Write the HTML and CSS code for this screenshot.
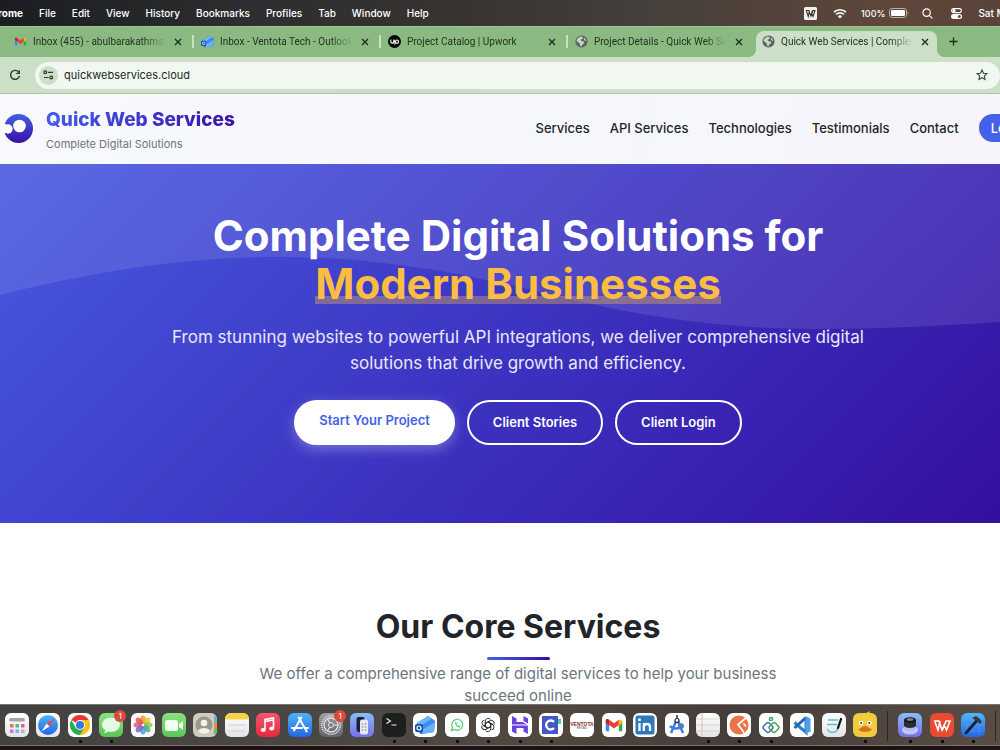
FILE: index.html
```html
<!DOCTYPE html>
<html lang="en">
<head>
<meta charset="utf-8">
<meta name="viewport" content="width=device-width, initial-scale=1">
<title>Quick Web Services | Complete Digital Solutions</title>
<link rel="stylesheet" href="styles.css">
</head>
<body>
<svg class="defs" aria-hidden="true">
  <defs>
    <linearGradient id="brand" x1="0" y1="0" x2="0" y2="1"><stop offset="0" stop-color="#4560e6"/><stop offset="1" stop-color="#380fa4"/></linearGradient>
    <linearGradient id="blue" x1="0" y1="0" x2="0" y2="1"><stop offset="0" stop-color="#4db7f8"/><stop offset="1" stop-color="#2464e4"/></linearGradient>
    <linearGradient id="green" x1="0" y1="0" x2="0" y2="1"><stop offset="0" stop-color="#8be282"/><stop offset="1" stop-color="#5ac552"/></linearGradient>
    <linearGradient id="red" x1="0" y1="0" x2="0" y2="1"><stop offset="0" stop-color="#f2566e"/><stop offset="1" stop-color="#e8293c"/></linearGradient>
    <linearGradient id="silver" x1="0" y1="0" x2="0" y2="1"><stop offset="0" stop-color="#ffffff"/><stop offset="1" stop-color="#e4e4e6"/></linearGradient>
    <linearGradient id="grey" x1="0" y1="0" x2="0" y2="1"><stop offset="0" stop-color="#a0a0a5"/><stop offset="1" stop-color="#636368"/></linearGradient>
    <linearGradient id="violet" x1="0" y1="0" x2="0" y2="1"><stop offset="0" stop-color="#86bdf8"/><stop offset="1" stop-color="#7a6ee6"/></linearGradient>
    <symbol id="globe" viewBox="0 0 12 12"><circle cx="6" cy="6" r="5.6" fill="#5f6368"/><path d="M2 3.5 5 1.4 7.5 2 6.8 3.8 5.3 4.2 5.6 5.6 8 6 8.4 7.6 6.5 9 6 10.6 4.6 9.7 4.5 7.8 1.5 5.6Z" fill="#c2dabd"/><path d="M8.6 2.4 10.3 5 9.5 5.6 8.2 4.4Z" fill="#c2dabd"/></symbol>
    <symbol id="gmail" viewBox="0 0 16 12"><path d="M0 2v9a1 1 0 0 0 1 1h2.5V4Z" fill="#4285f4"/><path d="M12.5 4v8H15a1 1 0 0 0 1-1V2Z" fill="#34a853"/><path d="M12.5 0.8 16 2v2.2l-3.5 2.6Z" fill="#fbbc04"/><path d="M3.500 1 8 4.400 12.500 1v5L8 9.400 3.500 6Z" fill="#ea4335"/><path d="M0 2C0 .2 2 0 3.500 1v5.500L0 3.800Z" fill="#c5221f"/></symbol>
    <symbol id="outlook" viewBox="0 0 20 18"><path d="M2 7 13 0 20 5 19 16 6 18 2 15Z" fill="#2763c7"/><path d="M2 7 13 0 17 3 6 10Z" fill="#6fb8f6"/><path d="m5 10 12-7 3 3-12 7Z" fill="#3b8def"/><path d="m8 13 12-7-1 10-12 2Z" fill="#67b3f5"/><rect y="8" width="8" height="8" rx="2" fill="#1550ad"/><circle cx="4" cy="12" r="2" fill="none" stroke="#fff" stroke-width="1.2"/></symbol>
    <symbol id="close" viewBox="0 0 8 8"><path d="m1 1 6 6M7 1 1 7" stroke="#1f2b1e" stroke-width="1.3"/></symbol>
  </defs>
</svg>

<header class="menubar">
  <nav class="menus" aria-label="Application menu">
    <button class="menu app-menu">rome</button><button class="menu">File</button><button class="menu">Edit</button><button class="menu">View</button><button class="menu">History</button><button class="menu">Bookmarks</button><button class="menu">Profiles</button><button class="menu">Tab</button><button class="menu">Window</button><button class="menu">Help</button>
  </nav>
  <div class="status">
    <svg width="13" height="13" viewBox="0 0 13 13"><rect width="13" height="13" rx="1.5" fill="#f2efed"/><path d="M1.800 3.500h3l2 5.500 1.700-5.500M5.500 3.500 4.300 9.500 2.400 4M6.800 9.500 9 3.500h2L9 9.500 7.500 6" fill="none" stroke="#3b3532" stroke-width="1.1"/></svg>
    <svg class="wifi" width="14" height="11" viewBox="0 0 14 11"><g fill="none" stroke="#fff" stroke-width="1.7"><path d="M1 4.2a8.6 8.6 0 0 1 12 0M3.1 6.4a5.6 5.6 0 0 1 7.8 0"/></g><path d="M7 10.6 4.8 8.3a3.2 3.2 0 0 1 4.4 0Z" fill="#fff"/></svg>
    <span class="battery">100%<svg width="20" height="10" viewBox="0 0 20 10"><rect x=".5" y=".5" width="17" height="9" rx="2.6" fill="none" stroke="#b9b0aa"/><rect x="2" y="2" width="14" height="6" rx="1.2" fill="#fff"/><path d="M18.6 3.5c1 .5 1 2.500 0 3Z" fill="#b9b0aa"/></svg></span>
    <svg class="search" width="11" height="11" viewBox="0 0 11 11"><g fill="none" stroke="#fff" stroke-width="1.2"><circle cx="4.600" cy="4.600" r="3.700"/><path d="m7.300 7.300 3 3"/></g></svg>
    <svg width="11" height="11" viewBox="0 0 11 11"><rect x=".6" y=".6" width="9.800" height="4" rx="2" fill="none" stroke="#fff" stroke-width="1.100"/><circle cx="3" cy="2.600" r="1.600" fill="#fff"/><rect y="6" width="11" height="5" rx="2.500" fill="#fff"/><circle cx="8.300" cy="8.500" r="1.500" fill="#5a4b44"/></svg>
    <span class="clock">Sat May</span>
  </div>
</header>

<div class="tabs" role="tablist">
  <div class="tab" role="tab"><svg class="favicon" viewBox="-1 -2 18 16"><use href="#gmail" width="16" height="12"/></svg><span class="tab-title">Inbox (455) - abulbarakathms@gmail</span><button class="close" aria-label="Close tab"><svg width="8" height="8"><use href="#close"/></svg></button></div>
  <div class="tab" role="tab"><svg class="favicon"><use href="#outlook"/></svg><span class="tab-title">Inbox - Ventota Tech - Outlook</span><button class="close" aria-label="Close tab"><svg width="8" height="8"><use href="#close"/></svg></button></div>
  <div class="tab" role="tab"><svg class="favicon" viewBox="0 0 13 13"><circle cx="6.500" cy="6.500" r="6.500" fill="#070707"/><path d="M2.800 4.600v1.900c0 2.200 3 2.200 3 0V4.600c.8 2.400 1.800 3.700 3 3.700 2.300 0 2.300-3.300 0-3.300C7.500 5 7.100 6.600 6.800 9.500" fill="none" stroke="#fff" stroke-width="1.100"/></svg><span class="tab-title">Project Catalog | Upwork</span><button class="close" aria-label="Close tab"><svg width="8" height="8"><use href="#close"/></svg></button></div>
  <div class="tab no-rule" role="tab"><svg class="favicon"><use href="#globe"/></svg><span class="tab-title">Project Details - Quick Web Services</span><button class="close" aria-label="Close tab"><svg width="8" height="8"><use href="#close"/></svg></button></div>
  <div class="tab active" role="tab" aria-selected="true"><svg class="favicon"><use href="#globe"/></svg><span class="tab-title">Quick Web Services | Complete Digital</span><button class="close" aria-label="Close tab"><svg width="8" height="8"><use href="#close"/></svg></button></div>
  <button class="new-tab" aria-label="New tab"><svg width="9" height="9" viewBox="0 0 9 9"><path d="M4.500.5v8M.5 4.500h8" stroke="#1f2b1e" stroke-width="1.300"/></svg></button>
</div>

<div class="toolbar">
  <button class="reload" aria-label="Reload"><svg width="12" height="12" viewBox="0 0 12 12"><path d="M10 3.600A4.500 4.500 0 1 0 10.500 6.800" fill="none" stroke="#2b382a" stroke-width="1.400"/><path d="M10.900.8v4.300H6.600l1.400-1.400h1.500V2.200Z" fill="#2b382a"/></svg></button>
  <div class="omnibox">
    <button class="site-info" aria-label="Site information"><svg width="11" height="10" viewBox="0 0 11 10"><g fill="none" stroke="#2b382a" stroke-width="1.200"><circle cx="2.300" cy="2.300" r="1.400"/><path d="M5 2.300h5M1 7.500h4.500"/><circle cx="8.200" cy="7.500" r="1.400"/></g></svg></button>
    <input class="url" type="text" aria-label="Address" value="quickwebservices.cloud">
    <button class="star" aria-label="Bookmark this page"><svg width="12" height="12" viewBox="0 0 12 12"><path d="m6 1 1.450 3.200 3.500.4-2.600 2.350.7 3.450L6 8.700 2.950 10.400l.7-3.450L1.050 4.600l3.500-.4Z" fill="none" stroke="#3a4639" stroke-width="1.100"/></svg></button>
  </div>
</div>

<div class="page">
  <header class="site-header">
    <a class="brand" href="#">
      <svg width="29" height="29" viewBox="0 0 29 29"><circle cx="14.500" cy="14.500" r="14.500" fill="url(#brand)"/><circle cx="15.500" cy="12" r="6.300" fill="#fff"/><circle cx="4" cy="15" r="4.700" fill="#fff"/><path d="M0 10h2v9H0Z" fill="#fff"/></svg>
      <span class="brand-text"><span class="brand-name">Quick Web Services</span><span class="brand-tag">Complete Digital Solutions</span></span>
    </a>
    <nav class="site-nav">
      <a href="#">Services</a><a href="#">API Services</a><a href="#">Technologies</a><a href="#">Testimonials</a><a href="#">Contact</a><a class="login" href="#">Login</a>
    </nav>
  </header>
  <main>
    <section class="hero">
      <svg class="wave" viewBox="0 0 1000 359" preserveAspectRatio="none" aria-hidden="true"><path d="M0 131C100 106 190 93 280 93 390 93 480 113 574 136 650 154 730 165 815 165 880 165 940 162 1000 158V0H0Z" fill="#fff" fill-opacity=".1"/></svg>
      <div class="hero-content">
        <h1>Complete Digital Solutions for<br><span class="accent">Modern Businesses</span></h1>
        <p>From stunning websites to powerful API integrations, we deliver comprehensive digital<br>solutions that drive growth and efficiency.</p>
        <div class="actions"><a class="btn primary" href="#">Start Your Project</a><a class="btn" href="#">Client Stories</a><a class="btn" href="#">Client Login</a></div>
      </div>
    </section>
    <section class="services">
      <h2>Our Core Services</h2>
      <p>We offer a comprehensive range of digital services to help your business<br>succeed online</p>
    </section>
  </main>
</div>

<footer class="dock">
  <div class="dock-group apps">
    <button class="icon" aria-label="Launchpad"><svg viewBox="0 0 24 24"><rect width="24" height="24" rx="6" fill="url(#silver)"/><rect x="4" y="5" width="16" height="3.500" rx="1.700" fill="#a5a5a7"/><path d="M5 11h3.500v3.500H5Z" fill="#ef6a54"/><path d="M10.500 11H14v3.500h-3.500Z" fill="#4dc27e"/><path d="M16 11h3.500v3.500H16Z" fill="#e45aa8"/><path d="M5 16.500h3.500V20H5Z" fill="#bc79eb"/><path d="M10.500 16.500H14V20h-3.500Z" fill="#6fb5f3"/><path d="M16 16.500h3.500V20H16Z" fill="#b4b4b8"/></svg></button>
    <button class="icon" aria-label="Safari"><svg viewBox="0 0 24 24"><rect width="24" height="24" rx="6" fill="url(#silver)"/><circle cx="12" cy="12" r="10" fill="url(#blue)"/><path d="M18.500 5.500 10.600 10.600 13.400 13.400Z" fill="#ee4b3e"/><path d="M5.500 18.500 10.600 10.600 13.400 13.400Z" fill="#fff"/></svg></button>
    <button class="icon running" aria-label="Chrome"><svg viewBox="0 0 24 24"><rect width="24" height="24" rx="6" fill="#fff"/><path d="M12 12 3.300 7A10 10 0 0 1 20.700 7Z" fill="#e33b2e"/><path d="M12 12V7h8.700A10 10 0 0 1 12 22Z" fill="#fbc116"/><path d="m12 12 4.300 2.500L12 22A10 10 0 0 1 3.300 7l4.400 7.500Z" fill="#2da94f"/><circle cx="12" cy="12" r="5" fill="#fff"/><circle cx="12" cy="12" r="4" fill="#3478e5"/></svg></button>
    <button class="icon running" aria-label="Messages"><svg viewBox="0 0 24 24"><rect width="24" height="24" rx="6" fill="url(#green)"/><path d="M12 4.500c5 0 9 3.200 9 7.200s-4 7.200-9 7.200c-1 0-2-.1-3-.4-1 .9-2.500 1.500-4 1.500 1-1 1.300-2 1.200-3C4.200 15.700 3 13.800 3 11.700c0-4 4-7.200 9-7.200Z" fill="#f0fff0" fill-opacity=".9"/></svg><span class="badge">1</span></button>
    <button class="icon" aria-label="Photos"><svg viewBox="0 0 24 24"><rect width="24" height="24" rx="6" fill="#fafafa"/><g fill-opacity=".85"><ellipse cx="12" cy="7" rx="2.800" ry="4.500" fill="#f29a27"/><ellipse cx="12" cy="7" rx="2.800" ry="4.500" fill="#e4c52b" transform="rotate(45 12 12)"/><ellipse cx="12" cy="7" rx="2.800" ry="4.500" fill="#9bc53c" transform="rotate(90 12 12)"/><ellipse cx="12" cy="7" rx="2.800" ry="4.500" fill="#4ab38a" transform="rotate(135 12 12)"/><ellipse cx="12" cy="7" rx="2.800" ry="4.500" fill="#5598df" transform="rotate(180 12 12)"/><ellipse cx="12" cy="7" rx="2.800" ry="4.500" fill="#7b64c4" transform="rotate(225 12 12)"/><ellipse cx="12" cy="7" rx="2.800" ry="4.500" fill="#c460a4" transform="rotate(270 12 12)"/><ellipse cx="12" cy="7" rx="2.800" ry="4.500" fill="#e8534b" transform="rotate(315 12 12)"/></g><circle cx="12" cy="12" r="1.300" fill="#fff"/></svg></button>
    <button class="icon" aria-label="FaceTime"><svg viewBox="0 0 24 24"><rect width="24" height="24" rx="6" fill="url(#green)"/><rect x="3" y="7" width="13" height="11" rx="2.500" fill="#f1fff0"/><path d="m17 11 4-3v9l-4-3Z" fill="#f1fff0"/></svg></button>
    <button class="icon" aria-label="Contacts"><svg viewBox="0 0 24 24"><rect width="24" height="24" rx="6" fill="#cfccbd"/><path d="M21 2a6 6 0 0 1 3 4v3h-3Z" fill="#55b6ee"/><path d="M21 9h3v7h-3Z" fill="#f28d35"/><path d="M21 16h3v2a6 6 0 0 1-3 4Z" fill="#5dc466"/><circle cx="11" cy="12" r="8.500" fill="#9a978c"/><circle cx="11" cy="10" r="3.300" fill="#f3f1e8"/><path d="M5 18c1-4 11-4 12 0-3 3.500-9 3.500-12 0Z" fill="#f3f1e8"/></svg></button>
    <button class="icon" aria-label="Notes"><svg viewBox="0 0 24 24"><rect width="24" height="24" rx="6" fill="url(#silver)"/><path d="M0 6.500V6a6 6 0 0 1 6-6h12a6 6 0 0 1 6 6v.5Z" fill="#f8d14b"/><path d="M3 12h18M3 18h18" stroke="#c9c9cb" stroke-width=".8"/></svg></button>
    <button class="icon" aria-label="Music"><svg viewBox="0 0 24 24"><rect width="24" height="24" rx="6" fill="url(#red)"/><path d="M9 16.500V6.500L17.500 5v10M9 8.500 17.500 7" fill="none" stroke="#fff" stroke-width="1.600"/><ellipse cx="7.200" cy="17" rx="2.500" ry="2" fill="#fff"/><ellipse cx="15.700" cy="15.500" rx="2.500" ry="2" fill="#fff"/></svg></button>
    <button class="icon" aria-label="App Store"><svg viewBox="0 0 24 24"><rect width="24" height="24" rx="6" fill="url(#blue)"/><path d="M13.300 4.500 6 17.500M10.700 4.500l8 14M4 15h10M17 15h3" fill="none" stroke="#fff" stroke-width="2" stroke-linecap="round"/></svg></button>
    <button class="icon" aria-label="System Settings"><svg viewBox="0 0 24 24"><rect width="24" height="24" rx="6" fill="url(#grey)"/><circle cx="12" cy="12" r="9.300" fill="none" stroke="#e2e2e4" stroke-width="1.500" stroke-dasharray="1.200 .8"/><circle cx="12" cy="12" r="7" fill="none" stroke="#e2e2e4" stroke-width="1.300"/><circle cx="12" cy="12" r="2.500" fill="none" stroke="#e2e2e4"/><path d="M14.500 12H19M10.700 9.800 8.500 6M10.700 14.200 8.500 18" stroke="#e2e2e4" stroke-width="1.200"/></svg><span class="badge">1</span></button>
    <button class="icon" aria-label="iPhone Mirroring"><svg viewBox="0 0 24 24"><rect width="24" height="24" rx="6" fill="url(#violet)"/><rect x="6.500" y="4" width="8" height="15" rx="2" fill="#1b2238"/><rect x="10" y="6.500" width="8" height="15" rx="2" fill="#e7e9f5"/><g fill="#8e8ea4"><circle cx="12.500" cy="11" r=".8"/><circle cx="15.500" cy="11" r=".8"/><circle cx="12.500" cy="14" r=".8"/><circle cx="15.500" cy="14" r=".8"/><circle cx="12.500" cy="17" r=".8"/><circle cx="15.500" cy="17" r=".8"/></g></svg></button>
    <button class="icon running" aria-label="Terminal"><svg viewBox="0 0 24 24"><rect width="24" height="24" rx="6" fill="#1d1e1e"/><path d="m4.500 5.500 4 2.500-4 2.500M9.500 12h5" fill="none" stroke="#f2f2f2" stroke-width="1.100"/></svg></button>
    <button class="icon running" aria-label="Outlook"><svg viewBox="0 0 24 24"><rect width="24" height="24" rx="6" fill="#fff"/><use href="#outlook" x="2" y="3" width="20" height="18"/></svg></button>
    <button class="icon running" aria-label="WhatsApp"><svg viewBox="0 0 24 24"><rect width="24" height="24" rx="6" fill="#fff"/><path d="m6.500 17.500 1-3a5.500 5.500 0 1 1 2 2Z" fill="none" stroke="#4fce6d" stroke-width="1.200"/><path d="M10 9.500c0 2.500 2 4.800 4.600 5.200l.9-1.400-1.700-1-.8.700c-.8-.4-1.300-.9-1.600-1.700l.5-.7-.7-1.500Z" fill="#4fce6d"/></svg></button>
    <button class="icon running" aria-label="ChatGPT"><svg viewBox="0 0 24 24"><rect width="24" height="24" rx="6" fill="#fff"/><g fill="none" stroke="#252525" stroke-width=".9"><path id="knot" d="M9.300 13.500V8.300a2.900 2.900 0 0 1 5.200-1.800M9.300 10.400 13.500 8"/><use href="#knot" transform="rotate(60 12 12)"/><use href="#knot" transform="rotate(120 12 12)"/><use href="#knot" transform="rotate(180 12 12)"/><use href="#knot" transform="rotate(240 12 12)"/><use href="#knot" transform="rotate(300 12 12)"/></g></svg></button>
    <button class="icon running" aria-label="Hostinger"><svg viewBox="0 0 24 24"><rect width="24" height="24" rx="6" fill="#fff"/><path d="M4 3 8.500 5.500V9h6L19 11.500H4ZM20 10.500 15.500 8V3L20 5.500ZM4 12.500h15.900V21L15.500 18.500V15h-7v6L4 18.500Z" fill="#6a42e0"/></svg></button>
    <button class="icon running" aria-label="Clockify"><svg viewBox="0 0 24 24"><rect width="24" height="24" rx="6" fill="#fff"/><path d="M3 3h16v18H3Z" fill="#4557c6"/><path d="M19 6h3v5h-3Z" fill="#4bd28d"/><path d="M15 9a4.500 4.500 0 1 0 0 6" fill="none" stroke="#fff" stroke-width="2.300"/></svg></button>
    <button class="icon" aria-label="Ventota"><svg viewBox="0 0 24 24"><rect width="24" height="24" rx="6" fill="#fff"/><text class="logo-word" x="12" y="12.500">VENTOTA</text><text class="logo-sub" x="12" y="16">RETAIL</text></svg></button>
    <button class="icon" aria-label="Gmail"><svg viewBox="0 0 24 24"><rect width="24" height="24" rx="6" fill="#fff"/><use href="#gmail" x="3.500" y="5.500" width="17" height="13"/></svg></button>
    <button class="icon" aria-label="LinkedIn"><svg viewBox="0 0 24 24"><rect width="24" height="24" rx="6" fill="#fff"/><rect x="2.500" y="2.500" width="19" height="19" rx="2.500" fill="#2e78b7"/><path d="M6.500 10v8M10.800 18v-8M10.800 14c0-4 6.200-4 6.200 0v4" fill="none" stroke="#fff" stroke-width="2.300"/><circle cx="6.500" cy="6.700" r="1.500" fill="#fff"/></svg></button>
    <button class="icon" aria-label="Android Studio"><svg viewBox="0 0 24 24"><rect width="24" height="24" rx="6" fill="#fff"/><circle cx="16" cy="13" r="3" fill="#56a95f"/><path d="M12 6 6 20M12 6l6 14M5 13c3 4 11 3 13-1" fill="none" stroke="#4079ed" stroke-width="2.500"/><path d="M12 2v3" stroke="#232b35" stroke-width="1.500"/><circle cx="12" cy="7.500" r="2" fill="#fff" stroke="#232b35" stroke-width="1.200"/></svg></button>
    <button class="icon running" aria-label="TextEdit"><svg viewBox="0 0 24 24"><rect width="24" height="24" rx="6" fill="url(#silver)"/><path d="M0 6h24M0 12h24M0 18h24" stroke="#cccdd0" stroke-width=".8"/><path d="M6 0v24" stroke="#efb6ae"/></svg></button>
    <button class="icon running" aria-label="API client"><svg viewBox="0 0 24 24"><rect width="24" height="24" rx="6" fill="#fff"/><circle cx="12" cy="12" r="9.500" fill="#ec7347"/><path d="m19 5-8 6.500 6 8M16.500 10.500l2.500 3" fill="none" stroke="#fff" stroke-width="1.700"/></svg></button>
    <button class="icon running" aria-label="Sequence"><svg viewBox="0 0 24 24"><rect width="24" height="24" rx="6" fill="#fff"/><g fill="none" stroke-width="1.500"><circle cx="12" cy="6" r="1.600" stroke="#45a25b"/><rect x="-4" y="-4" width="8" height="8" rx="2" stroke="#3c70b7" transform="translate(9 14.500) rotate(45)"/><rect x="-4" y="-4" width="8" height="8" rx="2" stroke="#45a25b" transform="translate(15 14.500) rotate(45)"/></g></svg></button>
    <button class="icon" aria-label="VS Code"><svg viewBox="0 0 24 24"><rect width="24" height="24" rx="6" fill="#fff"/><path d="M16 4.500v15L4.500 9.500" fill="none" stroke="#2f7fc6" stroke-width="3"/><path d="M4.500 15 16 4.500" stroke="#2467ae" stroke-width="3"/><path d="m15.500 3 5 2.500v13l-5 2.500Z" fill="#4aa3e6"/></svg></button>
    <button class="icon" aria-label="Freeform"><svg viewBox="0 0 24 24"><rect width="24" height="24" rx="6" fill="url(#silver)"/><path d="M6 7h10M5 11.500h10M5.500 16c2 5 10 4 10-1" fill="none" stroke="#54bfd0" stroke-width="1.300"/><path d="m19 6-3 9" stroke="#161616" stroke-width="2.300" stroke-linecap="round"/></svg></button>
    <button class="icon running" aria-label="Cyberduck"><svg viewBox="0 0 24 24"><rect width="24" height="24" rx="6" fill="#f1cc3d"/><path d="M7 1c3 1 6-1 10-3-1 2-.5 3 1 4Z" fill="#f1cc3d"/><circle cx="8" cy="10" r="2.300" fill="#fff"/><circle cx="16.500" cy="10" r="2.300" fill="#fff"/><circle cx="8.200" cy="10" r=".9" fill="#222"/><circle cx="16.300" cy="10" r=".9" fill="#222"/><path d="M5 16c3 0 4-3 7-3s4 3 7 3c-2 4-12 4-14 0Z" fill="#dd6f29"/></svg></button>
  </div>
  <span class="rule"></span>
  <div class="dock-group recent">
    <button class="icon running" aria-label="Disk utility"><svg viewBox="0 0 24 24"><rect width="24" height="24" rx="6" fill="url(#violet)"/><ellipse cx="12" cy="17" rx="8" ry="4.500" fill="#dbe5ff" fill-opacity=".7"/><path d="M6 7v7c1 3 11 3 12 0V7Z" fill="#2b2d32"/><path d="M6 13c2 2.500 10 2.500 12 0v3c-2 2.500-10 2.500-12 0Z" fill="#a9bdf2"/><ellipse cx="12" cy="7" rx="6" ry="2.800" fill="#17181b"/><ellipse cx="12" cy="6.500" rx="3.500" ry="1.300" fill="#85888f"/></svg></button>
    <button class="icon running" aria-label="WPS Office"><svg viewBox="0 0 24 24"><rect width="24" height="24" rx="6" fill="#e94a30"/><path d="M4 8h5l3 9 4-9M10 8 8 17 5 9M12.500 17 16 8h4l-3.500 9L14 11" fill="none" stroke="#fff" stroke-width="1.600"/></svg></button>
    <button class="icon running" aria-label="Xcode"><svg viewBox="0 0 24 24"><rect width="24" height="24" rx="6" fill="url(#blue)"/><path d="M6 2v20M12 2v20M18 2v20M2 6h20M2 12h20M2 18h20" stroke="#7ab7f7" stroke-opacity=".5" stroke-width=".5"/><path d="M5 20 15.500 8" stroke="#18212c" stroke-width="2.800" stroke-linecap="round"/><path d="m11 5 4-2 4 3 2 3-2.500 2-2-2.500-3-2Z" fill="#353a42"/></svg></button>
  </div>
  <span class="rule"></span>
</footer>
</body>
</html>
```
FILE: styles.css
```css
* { box-sizing: border-box; }

body {
  margin: 0;
  height: 100vh;
  display: flex;
  flex-direction: column;
  overflow: hidden;
  background: #fff;
  color: #212529;
  font-family: Inter, "Liberation Sans", sans-serif;
}

button, input {
  margin: 0;
  padding: 0;
  border: 0;
  background: none;
  color: inherit;
  font: inherit;
}

a { color: inherit; text-decoration: none; }
svg { display: block; flex: none; }
.defs { position: absolute; width: 0; height: 0; }

/* System menu bar */
.menubar {
  flex: none;
  height: 26px;
  display: flex;
  justify-content: space-between;
  align-items: center;
  overflow: hidden;
  background: linear-gradient(90deg, #1c1d21, #2e2e30 25%, #373330 45%, #46403c 65%, #60463a 90%, #594339);
  color: #fff;
  font-size: 10px;
  font-weight: 500;
  white-space: nowrap;
}
.menus { display: flex; gap: 16px; }
.app-menu { font-weight: 700; margin-left: -2px; }
.status { display: flex; align-items: center; gap: 16px; margin-right: -23px; }
.status { margin-right: -17px; }
.battery { display: flex; align-items: center; gap: 4px; font-size: 9px; }
.wifi { margin-right: -2px; }
.search { margin: 0 2px 0 -3px; }

/* Tab strip */
.tabs {
  flex: none;
  height: 31px;
  display: flex;
  align-items: flex-end;
  padding-left: 6px;
  background: #8ab981;
  border-top: 1px solid #9bc694;
  color: #24331f;
  font-family: Roboto, "Liberation Sans", sans-serif;
  font-size: 10px;
}
.tab {
  position: relative;
  flex: 0 1 187px;
  min-width: 0;
  height: 26px;
  display: flex;
  align-items: center;
  gap: 6px;
  padding: 0 11px 5px 8px;
}
.tab:not(.active):not(.no-rule)::after {
  content: "";
  position: absolute;
  right: -1px;
  top: 4px;
  width: 2px;
  height: 13px;
  background: #c8e0c3;
}
.tab.active {
  flex-basis: 181px;
  margin-left: 2px;
  padding: 0 8px 5px 6px;
  background: #cbe0c6;
  border-radius: 8px 8px 0 0;
}
.tab.active::before, .tab.active::after {
  content: "";
  position: absolute;
  bottom: 0;
  width: 8px;
  height: 8px;
}
.tab.active::before { left: -8px; background: radial-gradient(circle at 0 0, transparent 8px, #cbe0c6 8px); }
.tab.active::after { right: -8px; background: radial-gradient(circle at 100% 0, transparent 8px, #cbe0c6 8px); }
.favicon { width: 13px; height: 13px; }
.tab-title {
  flex: 1;
  min-width: 0;
  overflow: hidden;
  white-space: nowrap;
  mask-image: linear-gradient(90deg, #000 84%, transparent);
}
.close { width: 8px; height: 8px; margin-left: 3px; }
.new-tab { margin: 0 0 11px 12px; }

/* Address bar */
.toolbar {
  flex: none;
  height: 37px;
  display: flex;
  align-items: center;
  gap: 14px;
  padding-left: 9px;
  background: #cbe0c6;
  border-bottom: 1px solid #acc5a8;
}
.omnibox {
  flex: 1;
  height: 27px;
  display: flex;
  align-items: center;
  gap: 6px;
  padding: 0 12px 0 4px;
  border-radius: 14px;
  background: #f1f8f1;
}
.site-info {
  width: 19px;
  height: 19px;
  display: grid;
  place-items: center;
  border-radius: 50%;
  background: #cbe0c6;
}
.url { flex: 1; min-width: 0; outline: 0; color: #22291f; font-size: 11px; }

/* Web page */
.page { flex: 1; min-height: 0; overflow: hidden; }
.site-header {
  height: 70px;
  display: flex;
  align-items: center;
  justify-content: space-between;
  padding: 0 0 2px 4px;
  overflow: hidden;
  background: linear-gradient(100deg, #f8f8fd, #f5f7fd 55%, #f7f4fb);
}
.brand { display: flex; align-items: center; gap: 13px; }
.brand-text { display: flex; flex-direction: column; gap: 4px; padding-top: 4px; }
.brand-name {
  background: linear-gradient(135deg, #4361ee, #3a0ca3);
  background-clip: text;
  color: transparent;
  font-size: 19px;
  line-height: 24px;
  font-weight: 800;
}
.brand-tag { color: #6c757d; font-size: 11px; line-height: 16px; }
.site-nav {
  display: flex;
  align-items: center;
  gap: 20px;
  margin-right: -37px;
  font-size: 13px;
  font-weight: 500;
  white-space: nowrap;
}
.login { padding: 6px 12px; border-radius: 14px; background: #4561e8; color: #fff; line-height: 16px; }

.hero {
  position: relative;
  padding: 48px 0 78px 36px;
  background: linear-gradient(135deg, #485ae0, #3c34c2 50%, #350f9f);
  color: #fff;
  text-align: center;
}
.wave { position: absolute; inset: 0; width: 100%; height: 100%; }
.hero-content { position: relative; }
.hero h1 { margin: 0; font-size: 42px; line-height: 48px; font-weight: 700; }
.accent { position: relative; display: inline-block; color: #f8bd42; z-index: 0; }
.accent::after {
  content: "";
  position: absolute;
  z-index: -1;
  left: 0;
  right: 0;
  bottom: 4px;
  height: 8px;
  background: rgba(248, 189, 66, .35);
}
.hero p { margin: 16px 0 0; color: #e9e7f8; font-size: 17px; line-height: 26px; }
.actions { display: flex; justify-content: center; gap: 12px; margin-top: 24px; }
.btn {
  padding: 11px 24px;
  border: 2px solid #fff;
  border-radius: 23px;
  font-size: 13px;
  line-height: 19px;
  font-weight: 600;
}
.btn.primary {
  padding: 9px 23px 13px;
  background: #fff;
  color: #4561e8;
  box-shadow: 0 4px 13px rgba(255, 255, 255, .3);
}

.services { padding: 84px 0 0 36px; text-align: center; }
.services h2 { margin: 0; font-size: 32px; line-height: 40px; font-weight: 700; }
.services h2::after {
  content: "";
  display: block;
  width: 63px;
  height: 3px;
  margin: 10px auto 0;
  border-radius: 2px;
  background: linear-gradient(90deg, #4361ee, #3a0ca3);
}
.services p { margin: 3px 0 0; color: #6c757d; font-size: 15px; line-height: 22px; }

/* Dock */
.dock {
  flex: none;
  height: 46px;
  display: flex;
  align-items: flex-start;
  gap: 10px;
  padding: 8px 4px 0 5px;
  border-top: 1px solid #777573;
  background: linear-gradient(#1c1312, #1c1312) bottom / 100% 4px no-repeat,
    linear-gradient(#7b746f, #7b746f) 0 40px / 100% 1px no-repeat,
    linear-gradient(90deg, #444241, #4b4844 35%, #50473f 55%, #443e3b 72%, #594c44);
}
.dock-group { display: flex; justify-content: space-between; }
.apps { flex: 1; min-width: 0; }
.recent { width: 87px; }
.icon { position: relative; width: 24px; height: 24px; }
.icon svg { width: 24px; height: 24px; overflow: visible; }
.running::after {
  content: "";
  position: absolute;
  left: 11px;
  top: 27px;
  width: 3px;
  height: 3px;
  border-radius: 1px;
  background: #080808;
}
.badge {
  position: absolute;
  top: -3px;
  right: -3px;
  width: 12px;
  height: 12px;
  border-radius: 50%;
  background: #dc493d;
  color: #fff;
  font-size: 8px;
  line-height: 12px;
}
.rule { width: 1px; height: 30px; margin-top: -2px; background: #2c2624; }
.logo-word { fill: #8f2734; font: 700 5px "Liberation Sans", sans-serif; text-anchor: middle; }
.logo-sub { fill: #555; font: 3px "Liberation Sans", sans-serif; text-anchor: middle; }
```
